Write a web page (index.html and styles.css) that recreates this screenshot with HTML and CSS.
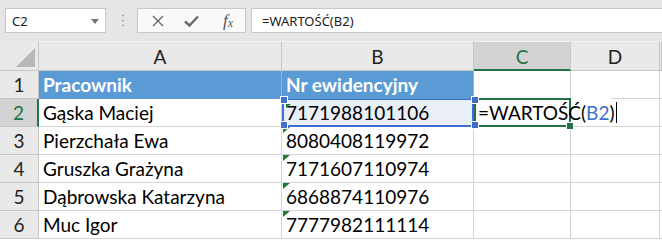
FILE: index.html
```html
<!DOCTYPE html>
<html>

<head>
  <link rel="stylesheet" href="styles.css">
</head>

<body>
  <div class="toolbar">
    <div class="namebox">
      <span>C2</span>
      <svg class="namebox-arrow" width="8" height="5" viewBox="0 0 8 5"><path d="M0 0h8L4 5z" fill="#777" /></svg>
    </div>
    <div class="grip"></div>
    <div class="fx-buttons">
      <svg width="12" height="12" viewBox="0 0 12 12"><path d="M1 1l10 10M11 1L1 11" stroke="#6a6a6a" stroke-width="1.4" fill="none" /></svg>
      <svg width="15" height="12" viewBox="0 0 15 12"><path d="M1 6.5l4.5 4L14 1.5" stroke="#6a6a6a" stroke-width="2.4" fill="none" /></svg>
      <span class="fx">f<sub>x</sub></span>
    </div>
    <div class="formula">=WARTOŚĆ(B2)</div>
  </div>

  <div class="sheet">
    <div class="cell corner"><span class="corner-tri"></span></div>
    <div class="cell colhead">A</div>
    <div class="cell colhead">B</div>
    <div class="cell colhead selected">C</div>
    <div class="cell colhead">D</div>
    <div class="cell colhead"></div>

    <div class="cell rowhead">1</div>
    <div class="cell title">Pracownik</div>
    <div class="cell title">Nr ewidencyjny</div>
    <div class="cell"></div>
    <div class="cell"></div>
    <div class="cell"></div>

    <div class="cell rowhead selected">2</div>
    <div class="cell">Gąska Maciej</div>
    <div class="cell number ref"><span class="tri"></span>7171988101106
      <span class="handle tl"></span><span class="handle bl"></span>
    </div>
    <div class="cell active">=WARTOŚĆ(<span class="ref-text">B2</span>)<span class="caret"></span>
      <span class="handle tl"></span><span class="handle bl"></span>
      <span class="fill-handle"></span>
    </div>
    <div class="cell"></div>
    <div class="cell"></div>

    <div class="cell rowhead">3</div>
    <div class="cell">Pierzchała Ewa</div>
    <div class="cell number"><span class="tri"></span>8080408119972</div>
    <div class="cell"></div>
    <div class="cell"></div>
    <div class="cell"></div>

    <div class="cell rowhead">4</div>
    <div class="cell">Gruszka Grażyna</div>
    <div class="cell number"><span class="tri"></span>7171607110974</div>
    <div class="cell"></div>
    <div class="cell"></div>
    <div class="cell"></div>

    <div class="cell rowhead">5</div>
    <div class="cell">Dąbrowska Katarzyna</div>
    <div class="cell number"><span class="tri"></span>6868874110976</div>
    <div class="cell"></div>
    <div class="cell"></div>
    <div class="cell"></div>

    <div class="cell rowhead">6</div>
    <div class="cell">Muc Igor</div>
    <div class="cell number"><span class="tri"></span>7777982111114</div>
    <div class="cell"></div>
    <div class="cell"></div>
    <div class="cell"></div>
  </div>
</body>

</html>
```

FILE: styles.css
```css
body {
  margin: 0;
  width: 662px;
  height: 240px;
  overflow: hidden;
  background: #fff;
  font-family: Lato, "Liberation Sans", sans-serif;
}

.toolbar {
  height: 41px;
  box-sizing: border-box;
  padding: 8px 0 0 5px;
  display: flex;
  align-items: flex-start;
  background: #e6e6e6;
}

.namebox,
.fx-buttons,
.formula {
  height: 25px;
  box-sizing: border-box;
  border: 1px solid #c8c8c8;
  background: #fff;
  font-family: "Noto Sans", sans-serif;
  font-size: 13px;
  color: #222;
}

.namebox {
  width: 101px;
  display: flex;
  align-items: center;
  justify-content: space-between;
  padding: 0 6px 0 6px;
}

.namebox-arrow {
  margin-top: 1px;
}

.grip {
  width: 2px;
  height: 16px;
  margin: 5px 13px 0 16px;
  background: radial-gradient(circle, #a0a0a0 0.8px, transparent 1.2px) 0 0 / 2px 5px repeat-y;
}

.fx-buttons {
  width: 109px;
  display: flex;
  align-items: center;
  padding-left: 14px;
  gap: 20px;
  background: #fafafa;
}

.fx {
  font-family: "Liberation Serif", serif;
  font-style: italic;
  font-size: 17px;
  color: #555;
  margin-left: 4px;
}

.fx sub {
  font-size: 12px;
  vertical-align: -1px;
}

.formula {
  flex: 1;
  margin-left: 5px;
  border-right: none;
  display: flex;
  align-items: center;
  padding-left: 10px;
}

.sheet {
  display: grid;
  grid-template-columns: 39px 243px 192px 97px 89px 2px;
  grid-template-rows: 30px repeat(6, 28px);
  font-size: 19px;
  color: #000;
}

.cell {
  position: relative;
  box-sizing: border-box;
  border-right: 1px solid #d4d4d4;
  border-bottom: 1px solid #d4d4d4;
  padding: 0 0 2px 4px;
  display: flex;
  align-items: flex-end;
  white-space: nowrap;
}

.corner,
.colhead,
.rowhead {
  background: #e9e9e9;
  border-color: #c6c6c6;
  color: #222;
}

.corner-tri {
  position: absolute;
  right: 3px;
  bottom: 3px;
  width: 0;
  height: 0;
  border-left: 19px solid transparent;
  border-bottom: 19px solid #b8b8b8;
}

.colhead {
  justify-content: center;
  align-items: center;
  padding: 1px 0 0 0;
  border-top: 1px solid #f2f2f2;
}

.rowhead {
  justify-content: center;
  padding: 0 0 2px 0;
}

.colhead.selected {
  background: #d3d3d3;
  color: #217346;
  border-bottom: 2px solid #217346;
}

.rowhead.selected {
  background: #d3d3d3;
  color: #217346;
  border-right: 2px solid #217346;
}

.title {
  background: #5b9bd5;
  color: #fff;
  font-weight: bold;
  border-right-color: #8cb8e2;
  border-bottom-color: #5b9bd5;
}

.tri {
  position: absolute;
  left: 1px;
  top: 0;
  width: 0;
  height: 0;
  border-top: 6px solid #1e7a32;
  border-right: 7px solid transparent;
}

.ref .tri {
  left: 2px;
  top: 4px;
  border-top-width: 4px;
  border-right-width: 5px;
}

.ref {
  background: #e9eef7;
  border: 2px solid #3f6fce;
  border-top-width: 1px;
  padding-left: 2px;
  padding-bottom: 1px;
}

.handle {
  position: absolute;
  width: 6px;
  height: 6px;
  background: #3f6fce;
  border: 1px solid #fff;
  z-index: 3;
}

.ref .tl { left: -4px; top: -4px; }
.ref .bl { left: -4px; bottom: -4px; }
.active .tl { left: -5px; top: -4px; }
.active .bl { left: -5px; bottom: -4px; }

.active {
  border: 2px solid #217346;
  margin-top: -1px;
  padding: 0 0 1px 2px;
  overflow: visible;
  z-index: 2;
}

.active::after {
  content: "";
  position: absolute;
  left: 95px;
  top: -2px;
  width: 40px;
  height: 26px;
  background: #fff;
  z-index: -1;
}

.ref-text {
  color: #3f6fce;
}

.caret {
  flex-shrink: 0;
  width: 1px;
  height: 21px;
  background: #000;
  margin: 0 0 1px 2px;
}

.fill-handle {
  position: absolute;
  right: -5px;
  bottom: -5px;
  width: 6px;
  height: 6px;
  background: #217346;
  border: 1px solid #fff;
}
```
